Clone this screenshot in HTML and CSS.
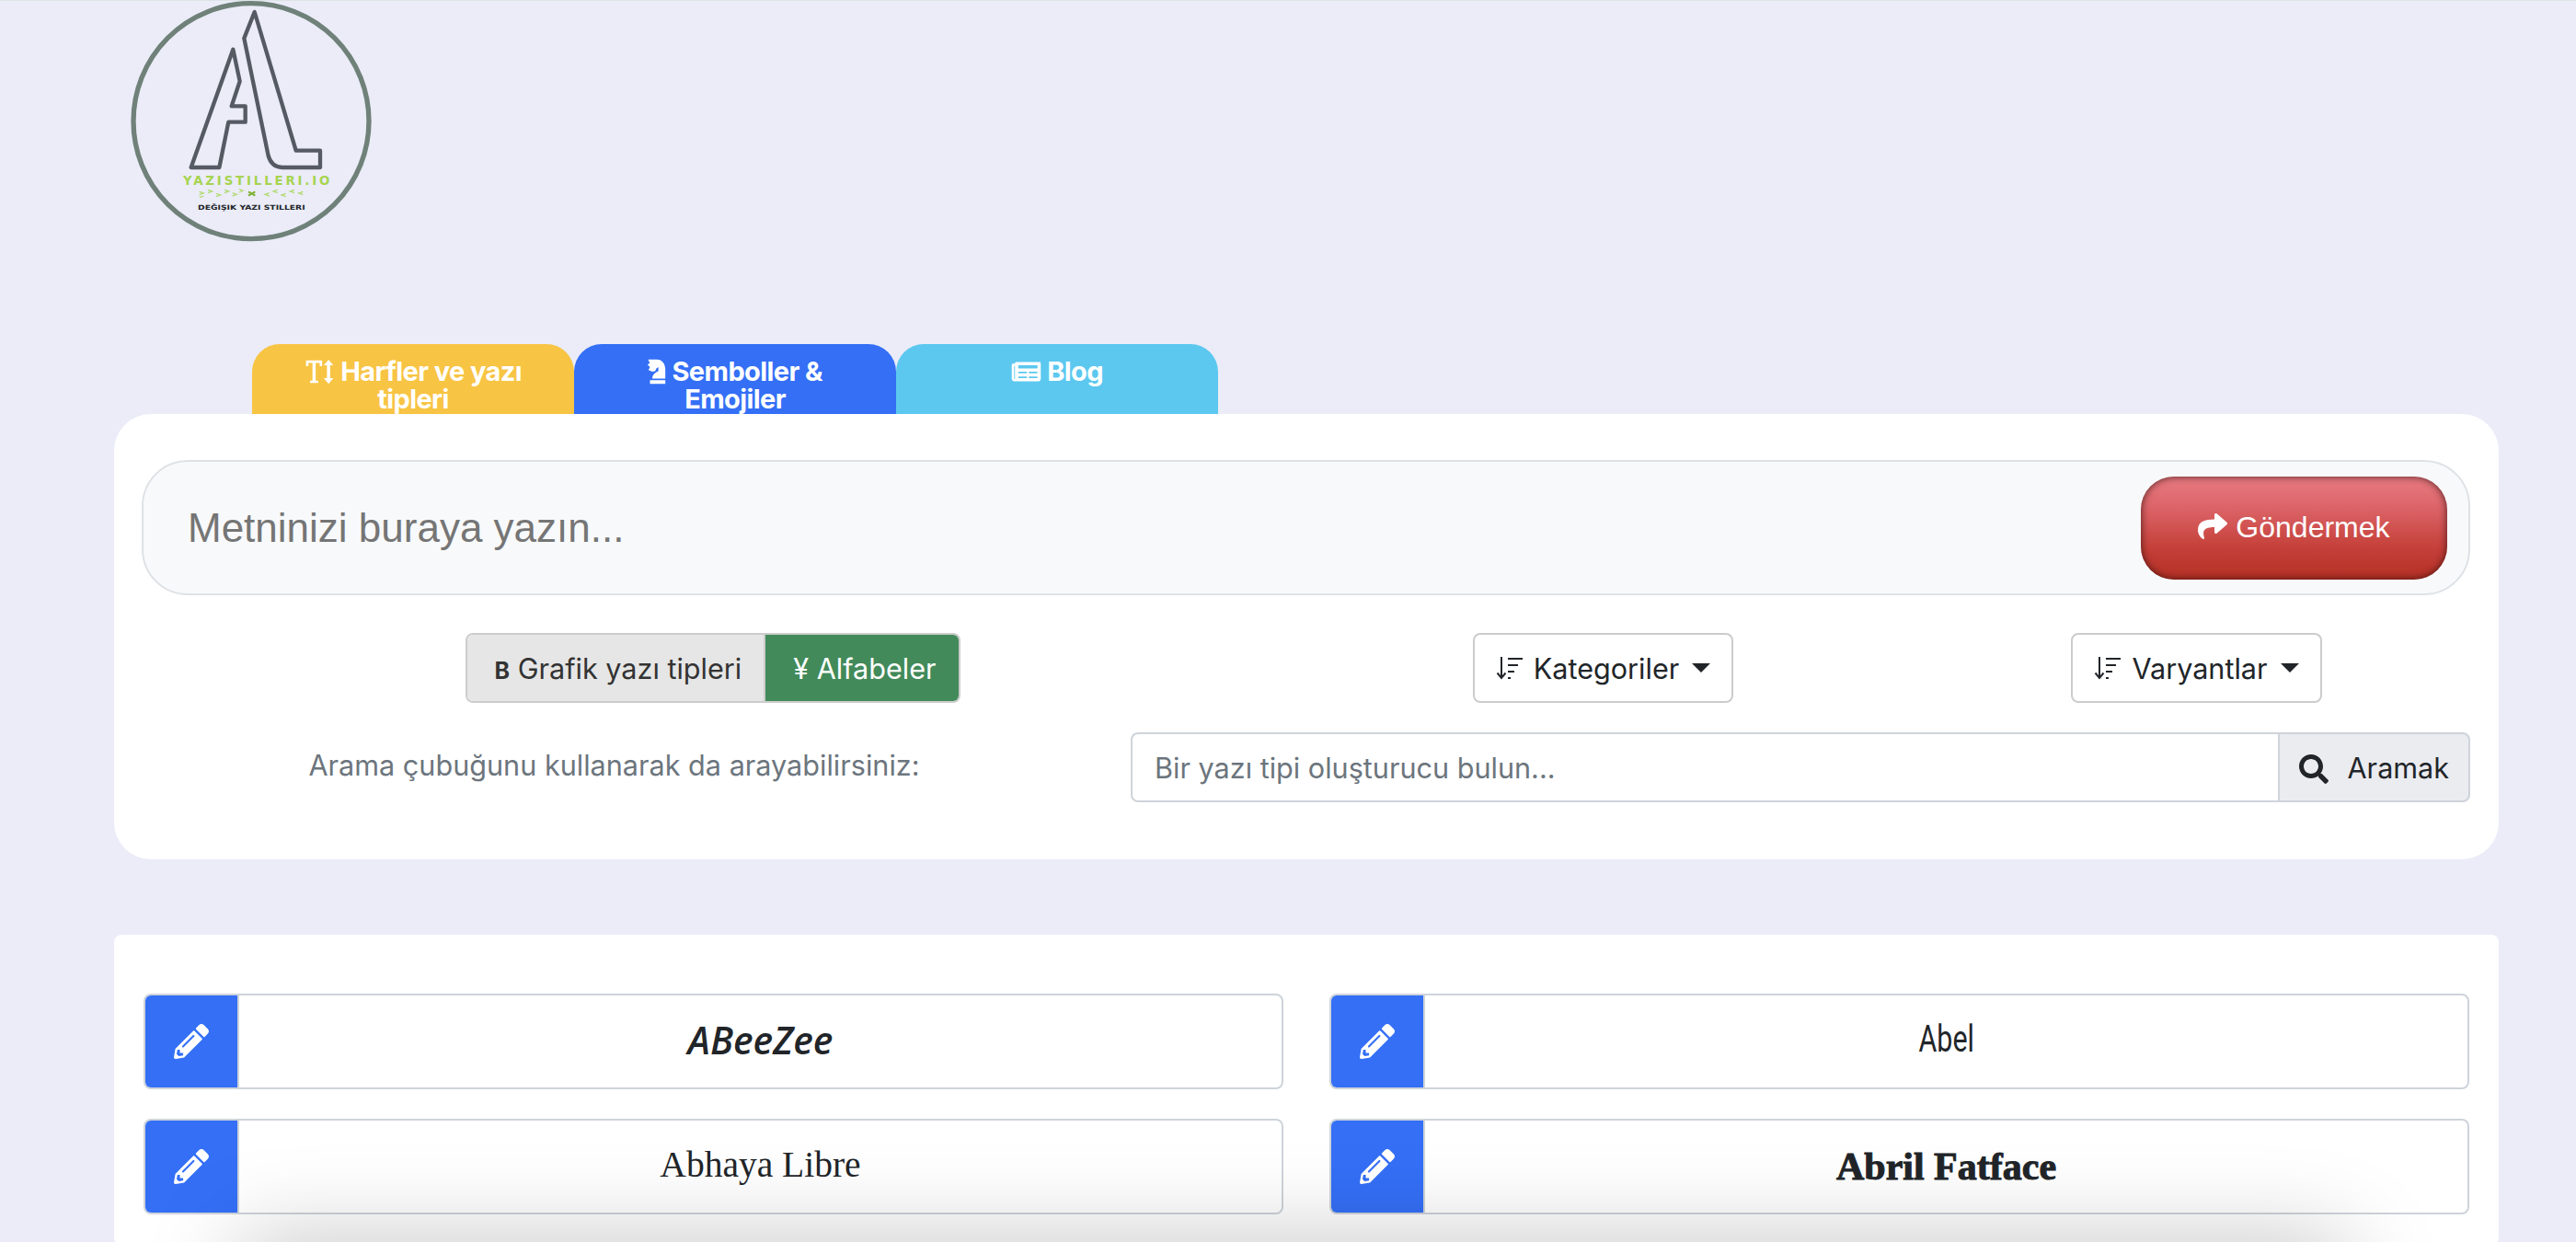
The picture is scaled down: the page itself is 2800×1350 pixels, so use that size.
FILE: index.html
```html
<!DOCTYPE html>
<html lang="tr">
<head>
  <meta charset="UTF-8">
  <meta name="viewport" content="width=device-width, initial-scale=1.0">
  <title>Yazı Stilleri</title>
  <link rel="stylesheet" href="styles.css">
</head>
<body>
  <header class="site-header">
    <svg class="logo" viewBox="63 0 792 792" xmlns="http://www.w3.org/2000/svg">
      <circle cx="459" cy="392" r="384" fill="none" stroke="#6f8179" stroke-width="16"/>
      <path d="M400 158L263 543H355L385 395H440V343H395L422 262Z" fill="none" stroke="#555a63" stroke-width="13" stroke-linejoin="round"/>
      <path d="M470 36L436 122L515 505Q525 541 560 543H684V488H605Z" fill="none" stroke="#555a63" stroke-width="13" stroke-linejoin="round"/>
      <text x="237" y="599" class="logo-title" textLength="478" lengthAdjust="spacing">YAZISTILLERI.IO</text>
      <path d="M290 622l14 5-14 5M290 640l14-3M318 616l14 5-14 5M345 628l14 5-14 5M372 616l14 5-14 5M398 626l14 5-14 5M420 614l12 5-12 5M628 622l-14 5 14 5M600 616l-14 5 14 5M572 628l-14 5 14 5M545 616l-14 5 14 5M518 626l-14 5 14 5" fill="none" stroke="#b4da76" stroke-width="4"/>
      <path d="M450 622l22 13M472 622l-22 13" fill="none" stroke="#7fb135" stroke-width="6"/>
      <text x="285" y="680" class="logo-sub" textLength="350" lengthAdjust="spacingAndGlyphs">DEĞIŞIK YAZI STILLERI</text>
    </svg>
  </header>

  <nav class="tabs">
    <a class="tab tab-yellow">
      <svg class="tab-icon" viewBox="0 0 36 32" xmlns="http://www.w3.org/2000/svg"><path d="M1 2h20v7h-3V5h-5v22h3v3H6v-3h3V5H4v4H1zM29 1l6 7h-4v16h4l-6 7-6-7h4V8h-4z" fill="#fff"/></svg>
      Harfler ve yazı tipleri
    </a>
    <a class="tab tab-blue">
      <svg class="tab-icon knight" viewBox="0 0 24 32" xmlns="http://www.w3.org/2000/svg"><path d="M1 0h11c7 0 11 6 11 13v12H6c0-4 2-6 5-8l3-2v-5l-3 2-1 3-4 1-5-2 2-4-3-3 3-3-2-2zM3 27h20v5H3z" fill="#fff"/></svg>
      Semboller &amp; Emojiler
    </a>
    <a class="tab tab-cyan">
      <svg class="tab-icon" viewBox="0 0 576 512" xmlns="http://www.w3.org/2000/svg"><path fill="#fff" d="M552 64H88c-13.255 0-24 10.745-24 24v8H24c-13.255 0-24 10.745-24 24v272c0 30.928 25.072 56 56 56h472c26.51 0 48-21.49 48-48V88c0-13.255-10.745-24-24-24zM56 400a8 8 0 0 1-8-8V144h16v248a8 8 0 0 1-8 8zm236-16H140c-6.627 0-12-5.373-12-12v-8c0-6.627 5.373-12 12-12h152c6.627 0 12 5.373 12 12v8c0 6.627-5.373 12-12 12zm208 0H348c-6.627 0-12-5.373-12-12v-8c0-6.627 5.373-12 12-12h152c6.627 0 12 5.373 12 12v8c0 6.627-5.373 12-12 12zm-208-96H140c-6.627 0-12-5.373-12-12v-8c0-6.627 5.373-12 12-12h152c6.627 0 12 5.373 12 12v8c0 6.627-5.373 12-12 12zm208 0H348c-6.627 0-12-5.373-12-12v-8c0-6.627 5.373-12 12-12h152c6.627 0 12 5.373 12 12v8c0 6.627-5.373 12-12 12zm0-96H140c-6.627 0-12-5.373-12-12v-40c0-6.627 5.373-12 12-12h360c6.627 0 12 5.373 12 12v40c0 6.627-5.373 12-12 12z"/></svg>
      Blog
    </a>
  </nav>

  <section class="tool-card">
    <div class="text-entry">
      <input type="text" class="text-input" placeholder="Metninizi buraya yazın...">
      <button class="send-btn">
        <svg class="send-icon" viewBox="0 0 512 512" xmlns="http://www.w3.org/2000/svg"><path fill="#fff" d="M503.691 189.836L327.687 37.851C312.281 24.546 288 35.347 288 56.015v80.053C127.371 137.907 0 170.1 0 322.326c0 61.441 39.581 122.309 83.333 154.132 13.653 9.931 33.111-2.533 28.077-18.631C66.066 312.814 132.917 274.316 288 272.085V360c0 20.7 24.3 31.453 39.687 18.164l176.004-152c11.071-9.562 11.086-26.753 0-36.328z"/></svg>
        Göndermek
      </button>
    </div>

    <div class="filter-row">
      <div class="filter-col">
        <div class="toggle-group">
          <button class="toggle-btn"><b class="toggle-b">B</b> Grafik yazı tipleri</button>
          <button class="toggle-btn active">¥ Alfabeler</button>
        </div>
      </div>
      <div class="filter-col">
        <button class="dropdown-btn">
          <svg class="sort-icon" viewBox="0 0 30 26" xmlns="http://www.w3.org/2000/svg"><path d="M6 1v22M1.5 18.5L6 24l4.500-5.500M13 3h16M13 10h11M13 17h7M13 24h3" fill="none" stroke="#212529" stroke-width="2"/></svg>
          Kategoriler
          <span class="caret"></span>
        </button>
      </div>
      <div class="filter-col">
        <button class="dropdown-btn">
          <svg class="sort-icon" viewBox="0 0 30 26" xmlns="http://www.w3.org/2000/svg"><path d="M6 1v22M1.500 18.500L6 24l4.500-5.500M13 3h16M13 10h11M13 17h7M13 24h3" fill="none" stroke="#212529" stroke-width="2"/></svg>
          Varyantlar
          <span class="caret"></span>
        </button>
      </div>
    </div>

    <div class="search-row">
      <p class="search-label">Arama çubuğunu kullanarak da arayabilirsiniz:</p>
      <div class="search-group">
        <input type="text" class="search-input" placeholder="Bir yazı tipi oluşturucu bulun...">
        <button class="search-btn">
          <svg class="search-icon" viewBox="0 0 512 512" xmlns="http://www.w3.org/2000/svg"><path fill="#212529" d="M505 442.7L405.3 343c-4.500-4.500-10.600-7-17-7H372c27.600-35.300 44-79.700 44-128C416 93.100 322.900 0 208 0S0 93.100 0 208s93.100 208 208 208c48.300 0 92.700-16.400 128-44v16.300c0 6.400 2.500 12.500 7 17l99.700 99.700c9.400 9.400 24.600 9.400 33.900 0l28.300-28.300c9.400-9.400 9.400-24.600.1-34zM208 336c-70.700 0-128-57.200-128-128 0-70.700 57.200-128 128-128 70.700 0 128 57.200 128 128 0 70.700-57.200 128-128 128z"/></svg>
          Aramak
        </button>
      </div>
    </div>
  </section>

  <section class="font-card">
    <div class="font-row">
      <span class="font-edit"><svg class="pencil" viewBox="0 0 512 512" xmlns="http://www.w3.org/2000/svg"><path fill="#fff" d="M497.900 142.100l-46.100 46.100c-4.700 4.700-12.300 4.700-17 0l-111-111c-4.700-4.700-4.700-12.300 0-17l46.100-46.100c18.700-18.700 49.100-18.700 67.900 0l60.100 60.100c18.800 18.700 18.800 49.100 0 67.900zM284.200 99.800L21.600 362.400.4 483.900c-2.900 16.400 11.400 30.600 27.800 27.800l121.500-21.300 262.600-262.600c4.700-4.700 4.700-12.300 0-17l-111-111c-4.800-4.700-12.400-4.700-17.100 0zM124.100 339.900c-5.500-5.500-5.500-14.300 0-19.800l154-154c5.500-5.500 14.300-5.500 19.800 0s5.500 14.300 0 19.800l-154 154c-5.500 5.500-14.300 5.500-19.800 0zM88 424h48v36.300l-64.500 11.300-31.100-31.100L51.700 376H88v48z"/></svg></span>
      <span class="font-name"><span class="name-abeezee">ABeeZee</span></span>
    </div>
    <div class="font-row">
      <span class="font-edit"><svg class="pencil" viewBox="0 0 512 512" xmlns="http://www.w3.org/2000/svg"><path fill="#fff" d="M497.900 142.100l-46.100 46.100c-4.700 4.700-12.300 4.700-17 0l-111-111c-4.700-4.700-4.700-12.300 0-17l46.100-46.100c18.700-18.700 49.100-18.700 67.900 0l60.100 60.100c18.800 18.700 18.800 49.100 0 67.900zM284.200 99.800L21.600 362.400.4 483.900c-2.900 16.400 11.400 30.600 27.800 27.800l121.500-21.300 262.600-262.600c4.700-4.700 4.700-12.300 0-17l-111-111c-4.800-4.700-12.400-4.700-17.100 0zM124.100 339.900c-5.500-5.500-5.500-14.300 0-19.800l154-154c5.500-5.500 14.300-5.500 19.800 0s5.500 14.300 0 19.800l-154 154c-5.500 5.500-14.300 5.500-19.800 0zM88 424h48v36.300l-64.500 11.300-31.100-31.100L51.700 376H88v48z"/></svg></span>
      <span class="font-name"><span class="name-abel">Abel</span></span>
    </div>
    <div class="font-row">
      <span class="font-edit"><svg class="pencil" viewBox="0 0 512 512" xmlns="http://www.w3.org/2000/svg"><path fill="#fff" d="M497.900 142.100l-46.100 46.100c-4.700 4.700-12.300 4.700-17 0l-111-111c-4.700-4.700-4.700-12.300 0-17l46.100-46.100c18.700-18.700 49.100-18.700 67.900 0l60.100 60.100c18.800 18.700 18.800 49.100 0 67.900zM284.200 99.800L21.600 362.400.4 483.900c-2.900 16.400 11.400 30.600 27.800 27.800l121.500-21.300 262.600-262.600c4.700-4.700 4.700-12.300 0-17l-111-111c-4.800-4.700-12.400-4.700-17.100 0zM124.100 339.900c-5.500-5.500-5.500-14.300 0-19.800l154-154c5.500-5.500 14.300-5.500 19.800 0s5.500 14.300 0 19.800l-154 154c-5.500 5.500-14.300 5.500-19.800 0zM88 424h48v36.300l-64.500 11.300-31.100-31.100L51.700 376H88v48z"/></svg></span>
      <span class="font-name"><span class="name-abhaya">Abhaya Libre</span></span>
    </div>
    <div class="font-row">
      <span class="font-edit"><svg class="pencil" viewBox="0 0 512 512" xmlns="http://www.w3.org/2000/svg"><path fill="#fff" d="M497.900 142.100l-46.100 46.100c-4.700 4.700-12.300 4.700-17 0l-111-111c-4.700-4.700-4.700-12.300 0-17l46.100-46.100c18.700-18.700 49.100-18.700 67.900 0l60.100 60.100c18.800 18.700 18.800 49.100 0 67.900zM284.200 99.800L21.600 362.400.4 483.900c-2.900 16.400 11.400 30.600 27.800 27.800l121.500-21.300 262.600-262.600c4.700-4.700 4.700-12.300 0-17l-111-111c-4.800-4.700-12.400-4.700-17.100 0zM124.100 339.900c-5.500-5.500-5.500-14.300 0-19.800l154-154c5.500-5.500 14.300-5.500 19.800 0s5.500 14.300 0 19.800l-154 154c-5.500 5.500-14.300 5.500-19.800 0zM88 424h48v36.300l-64.500 11.300-31.100-31.100L51.700 376H88v48z"/></svg></span>
      <span class="font-name"><span class="name-abril">Abril Fatface</span></span>
    </div>
  </section>

  <div class="bottom-sheet"></div>
</body>
</html>
```

FILE: styles.css
```css
html, body {
  height: 100%;
  overflow: hidden;
}

body {
  margin: 0;
  background-color: #ebecf8;
  border-top: 1px solid #dde5e6;
  box-sizing: border-box;
  font-family: Inter, "Noto Sans", sans-serif;
  color: #212529;
}

button, input {
  font-family: inherit;
}

.site-header {
  height: 373px;
  padding-left: 141px;
  box-sizing: border-box;
}

.logo {
  display: block;
  width: 264px;
  height: 264px;
}

.logo-title {
  font-family: "DejaVu Sans", sans-serif;
  font-weight: 700;
  font-size: 40px;
  fill: #a7d450;
}

.logo-sub {
  font-family: "DejaVu Sans", sans-serif;
  font-weight: 700;
  font-size: 22px;
  fill: #23252a;
}

/* tabs */
.tabs {
  display: flex;
  margin-left: 274px;
  height: 76px;
}

.tab {
  width: 350px;
  height: 76px;
  overflow: hidden;
  box-sizing: border-box;
  padding: 15px 44px 0;
  border-radius: 30px 30px 0 0;
  color: white;
  font-weight: 700;
  font-size: 29px;
  line-height: 30px;
  letter-spacing: -0.6px;
  text-align: center;
}

.tab-yellow {
  background-color: #f8c444;
}

.tab-blue {
  background-color: #346ff6;
}

.tab-cyan {
  background-color: #5cc8ef;
}

.tab-icon {
  width: 33px;
  height: 28px;
  vertical-align: -4px;
}

.knight {
  width: 20px;
}

/* top card */
.tool-card {
  margin: 0 84px 0 124px;
  height: 484px;
  padding: 50px 6px 0;
  box-sizing: border-box;
  background-color: white;
  border-radius: 40px;
}

.text-entry {
  display: flex;
  align-items: center;
  justify-content: space-between;
  margin: 0 25px 0 24px;
  height: 147px;
  box-sizing: border-box;
  padding: 0 23px 0 48px;
  background-color: #f8f9fa;
  border: 2px solid #dee2e6;
  border-radius: 50px;
}

.text-input {
  flex-grow: 1;
  border: none;
  outline: none;
  background: none;
  padding: 0;
  font-family: "Liberation Sans", Arial, sans-serif;
  font-size: 44px;
}

.text-input::placeholder {
  color: #757575;
  opacity: 1;
}

.send-btn {
  width: 333px;
  height: 112px;
  flex-shrink: 0;
  border: none;
  border-radius: 36px;
  background: linear-gradient(#e87b82 0%, #dc6468 30%, #c43f38 70%, #b53025 100%);
  box-shadow: inset 0 0 8px rgba(50, 15, 15, 0.85);
  color: white;
  font-family: "Liberation Sans", Arial, sans-serif;
  font-size: 32px;
}

.send-icon {
  width: 32px;
  height: 32px;
  vertical-align: -4px;
}

.filter-row {
  display: grid;
  grid-template-columns: 2fr 1fr 1fr;
  margin-top: 41px;
}

.filter-col {
  display: flex;
  justify-content: center;
}

.toggle-group {
  display: flex;
  width: 538px;
  height: 76px;
  box-sizing: border-box;
  border: 2px solid #ccc;
  border-radius: 8px;
  overflow: hidden;
}

.toggle-btn {
  height: 100%;
  width: 323px;
  padding: 0 0 0 6px;
  border: none;
  background-color: #e6e6e6;
  color: #333;
  font-size: 30.6px;
}

.toggle-btn.active {
  width: 213px;
  background-color: #428a5a;
  color: white;
  border-left: 2px solid #ccc;
}

.toggle-b {
  font-size: 25px;
}

.dropdown-btn {
  display: flex;
  align-items: center;
  justify-content: center;
  gap: 11px;
  height: 76px;
  padding: 0 23px;
  background-color: white;
  border: 2px solid #ccc;
  border-radius: 8px;
  color: #212529;
  font-size: 30.6px;
}

.sort-icon {
  width: 30px;
  height: 26px;
}

.caret {
  margin-left: 3px;
  border-top: 10px solid #212529;
  border-left: 10px solid transparent;
  border-right: 10px solid transparent;
}

.search-row {
  display: grid;
  grid-template-columns: 5fr 7fr;
  margin-top: 32px;
}

.search-label {
  margin: 14px 0 0;
  text-align: center;
  color: #6c757d;
  font-size: 30.6px;
  line-height: 44px;
}

.search-group {
  display: flex;
  margin: 0 25px 0 24px;
  height: 76px;
}

.search-input {
  flex-grow: 1;
  min-width: 0;
  padding: 0 24px;
  border: 2px solid #ced4da;
  border-right: none;
  border-radius: 8px 0 0 8px;
  outline: none;
  font-size: 30.6px;
}

.search-input::placeholder {
  color: #6c757d;
  opacity: 1;
}

.search-btn {
  width: 209px;
  flex-shrink: 0;
  padding: 0;
  background-color: #ebecf0;
  border: 2px solid #ced4da;
  border-radius: 0 8px 8px 0;
  color: #212529;
  font-size: 30.6px;
}

.search-icon {
  width: 32px;
  height: 32px;
  margin-right: 12px;
  vertical-align: -6px;
}

/* font list */
.font-card {
  display: grid;
  grid-template-columns: 1fr 1fr;
  gap: 32px 50px;
  margin: 82px 84px 0 124px;
  padding: 64px 32px 33px 32px;
  background-color: white;
  border-radius: 8px;
}

.font-row {
  display: flex;
  height: 104px;
  box-sizing: border-box;
  border: 2px solid #ced4da;
  border-radius: 8px;
  overflow: hidden;
}

.font-edit {
  display: flex;
  align-items: center;
  justify-content: center;
  width: 100px;
  flex-shrink: 0;
  background-color: #346ff6;
  border-right: 2px solid #ced4da;
}

.pencil {
  width: 38px;
  height: 38px;
}

.font-name {
  flex-grow: 1;
  text-align: center;
  line-height: 96px;
}

.name-abeezee {
  font-family: "Open Sans", sans-serif;
  font-style: italic;
  font-weight: 600;
  font-size: 41px;
}

/* nothing installed is as narrow as Abel, so squeeze Roboto */
.name-abel {
  display: inline-block;
  font-family: Roboto, sans-serif;
  font-weight: 400;
  font-size: 40px;
  transform: scaleX(0.76);
}

.name-abhaya {
  font-family: "Liberation Serif", serif;
  font-size: 39.5px;
}

.name-abril {
  font-family: "Liberation Serif", serif;
  font-weight: 700;
  font-size: 42px;
  line-height: 100px;
  -webkit-text-stroke: 1px #212529;
}

.bottom-sheet {
  position: fixed;
  left: 280px;
  right: 270px;
  bottom: -60px;
  height: 40px;
  box-shadow: 0 0 100px 20px rgba(0, 0, 0, 0.25);
}
```
